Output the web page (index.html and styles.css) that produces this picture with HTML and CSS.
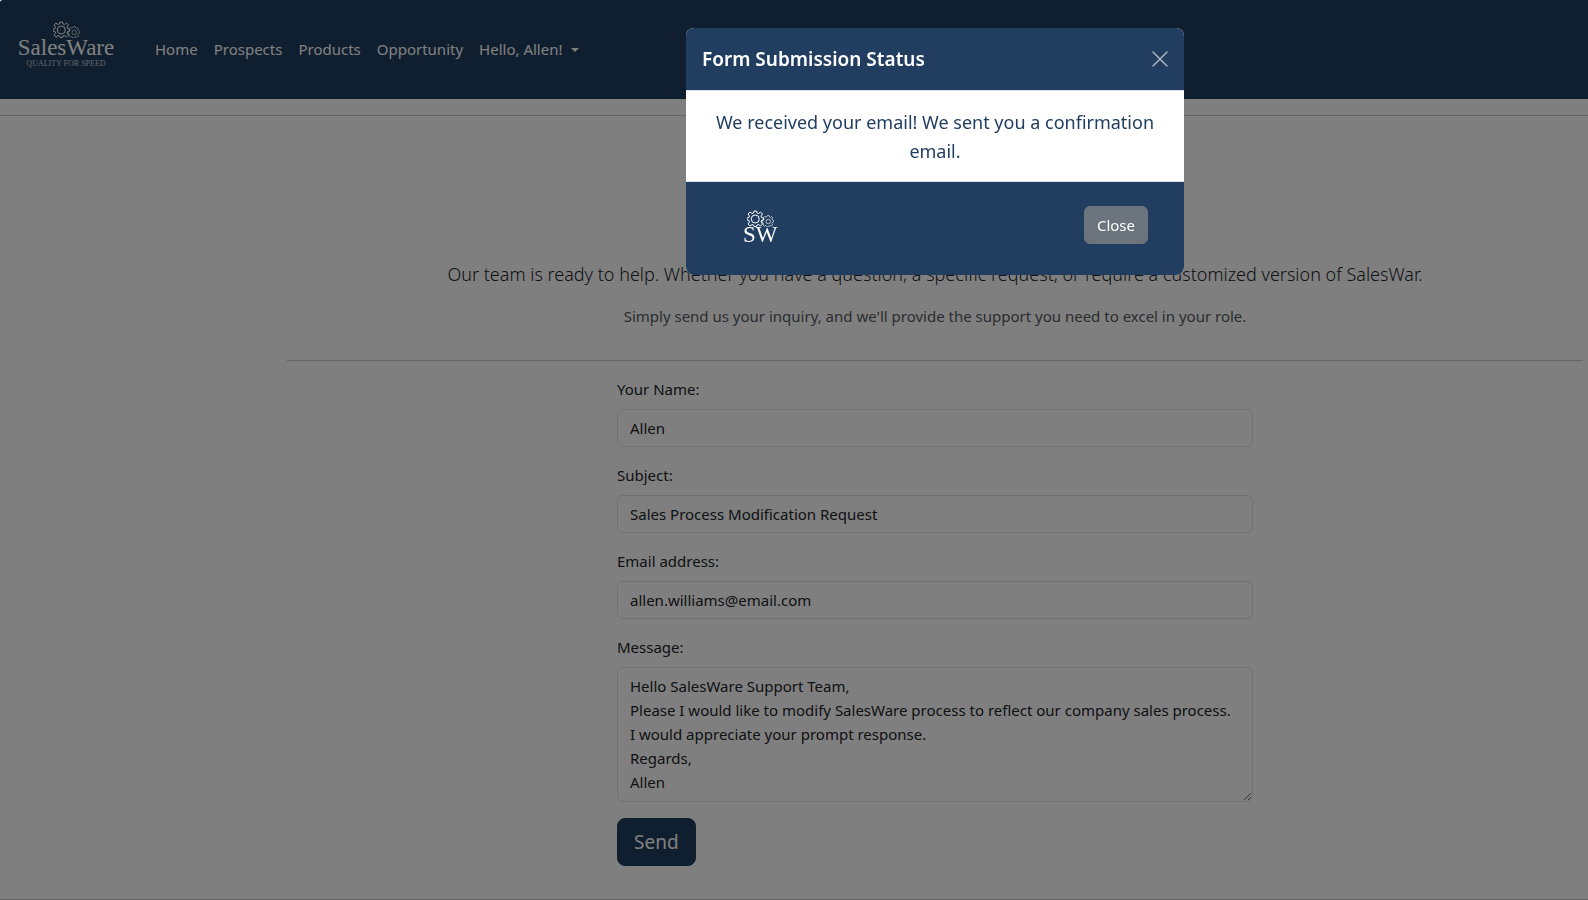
FILE: index.html
```html
<!DOCTYPE html>
<html lang="en">
<head>
<meta charset="utf-8">
<meta name="viewport" content="width=device-width, initial-scale=1">
<title>SalesWare</title>
<link rel="stylesheet" href="styles.css">
</head>
<body>
<svg class="defs" aria-hidden="true">
  <symbol id="gears" viewBox="0 0 54 34">
    <g fill="none" stroke="currentColor" stroke-width="2" stroke-linejoin="round">
      <path d="M14 2h5l1 4 3 1 4-3 4 4-3 4 1 3 4 1v4l-4 1-1 3 3 4-4 4-4-3-3 1-1 3h-5l-1-3-3-1-4 3-4-4 3-4-1-3-4-1v-4l4-1 1-3-3-4 4-4 4 3 3-1z"/>
      <circle cx="16.500" cy="18" r="8"/>
    </g>
    <g fill="none" stroke="currentColor" stroke-width="1.300" stroke-linejoin="round">
      <path d="M41 11h3l1 3 2 1 2-2 2 2-1 3 1 2 2 1v3l-2 1-1 2 1 3-2 2-3-1-2 1-1 2h-3l-1-2-2-1-2 1-3-2 1-3-1-2-2-1v-3l3-1 1-2-1-3 2-2 3 1 2-1z"/>
      <circle cx="42.500" cy="23" r="4.500"/>
    </g>
  </symbol>
</svg>

<header class="navbar">
  <a class="brand" href="#">
    <svg class="brand-gears" aria-hidden="true"><use href="#gears"/></svg>
    <span class="brand-name">SalesWare</span>
    <span class="brand-tagline">QUALITY FOR SPEED</span>
  </a>
  <nav class="nav">
    <a href="#">Home</a>
    <a href="#">Prospects</a>
    <a href="#">Products</a>
    <a href="#">Opportunity</a>
    <a class="dropdown" href="#">Hello, Allen!</a>
  </nav>
</header>
<hr class="page-rule">

<main class="content">
  <section class="intro">
    <p class="lead">Our team is ready to help. Whether you have a question, a specific request, or require a customized version of SalesWar.</p>
    <p class="sublead">Simply send us your inquiry, and we'll provide the support you need to excel in your role.</p>
  </section>
  <hr>
  <form class="contact-form">
    <div class="field">
      <label for="name">Your Name:</label>
      <input id="name" type="text" value="Allen">
    </div>
    <div class="field">
      <label for="subject">Subject:</label>
      <input id="subject" type="text" value="Sales Process Modification Request">
    </div>
    <div class="field">
      <label for="email">Email address:</label>
      <input id="email" type="email" value="allen.williams@email.com">
    </div>
    <div class="field">
      <label for="message">Message:</label>
      <textarea id="message" rows="5">Hello SalesWare Support Team,
Please I would like to modify SalesWare process to reflect our company sales process.
I would appreciate your prompt response.
Regards,
Allen</textarea>
    </div>
    <button class="send" type="button">Send</button>
  </form>
</main>
<footer class="page-footer"></footer>

<div class="backdrop">
  <div class="modal" role="dialog" aria-modal="true" aria-labelledby="modal-title">
    <div class="modal-header">
      <h1 id="modal-title">Form Submission Status</h1>
      <button class="dismiss" type="button" aria-label="Dismiss">
        <svg viewBox="0 0 16 16" aria-hidden="true"><path d="M1 1l14 14M15 1L1 15"/></svg>
      </button>
    </div>
    <p class="modal-body">We received your email! We sent you a confirmation email.</p>
    <div class="modal-footer">
      <div class="mark">
        <svg class="mark-gears" aria-hidden="true"><use href="#gears"/></svg>
        <span>SW</span>
      </div>
      <button class="close" type="button">Close</button>
    </div>
  </div>
</div>
</body>
</html>
```
FILE: styles.css
```css
:root {
  --navy: #213d60;
  --rule: #c8c9ca;
  --border: #dee2e6;
}

* {
  box-sizing: border-box;
}

body {
  margin: 0;
  min-height: 100vh;
  display: flex;
  flex-direction: column;
  background: #fff;
  color: #212529;
  font: 15px/24px "Segoe UI", "Noto Sans", sans-serif;
}

.defs {
  position: absolute;
  width: 0;
  height: 0;
}

p,
h1 {
  margin: 0;
}

hr {
  width: 100%;
  height: 1px;
  margin: 0;
  border: 0;
  background: var(--rule);
}

button,
input,
textarea {
  font: inherit;
  color: inherit;
}

.navbar {
  display: flex;
  align-items: center;
  min-height: 99px;
  background: #203e5f;
  border-top-left-radius: 3px;
  color: #fff;
}

.brand {
  display: flex;
  flex-direction: column;
  align-items: center;
  width: 131px;
  height: 74px;
  padding: 8px 0 0 2px;
  border-right: 1px solid #1c3858;
  color: #fff;
  font-family: "Liberation Serif", serif;
  text-decoration: none;
}

.brand-gears {
  width: 27px;
  height: 17px;
}

.brand-name {
  font-size: 23px;
  line-height: 20px;
}

.brand-tagline {
  color: #c4ccd5;
  font-size: 8px;
  line-height: 12px;
}

.nav {
  display: flex;
  gap: 16px;
  padding: 0 0 2px 24px;
}

.nav a {
  color: #fff;
  text-decoration: none;
}

.dropdown::after {
  content: "";
  display: inline-block;
  margin-left: 9px;
  vertical-align: 3px;
  border: 4px solid transparent;
  border-top-color: currentColor;
  border-bottom: 0;
}

.page-rule {
  margin-top: 16px;
}

.content {
  flex: 1;
  margin: 0 5px 0 287px;
}

.intro {
  padding: 143px 0 32px;
  text-align: center;
}

.lead {
  margin-bottom: 15px;
  font-size: 18px;
  line-height: 30px;
  font-weight: 350;
}

.sublead {
  color: #555a60;
}

.contact-form {
  width: calc(50% - 12px);
  margin: 16px auto 0;
}

.field {
  display: flex;
  flex-direction: column;
  gap: 8px;
  margin-bottom: 16px;
}

.field input,
.field textarea {
  display: block;
  width: 100%;
  margin: 0;
  padding: 6px 12px;
  background: #fff;
  border: 1px solid var(--border);
  border-radius: 6px;
}

.field input {
  height: 38px;
}

.field textarea {
  height: 135px;
  resize: vertical;
}

.send {
  padding: 8px 16px;
  border: 1px solid #203e5f;
  border-radius: 8px;
  background: #203e5f;
  color: #fff;
  font-size: 19px;
  line-height: 30px;
}

.page-footer {
  border-top: 1px solid #c8c0c8;
}

.backdrop {
  position: fixed;
  inset: 0;
  padding: 28px 5px 28px 287px;
  background: rgba(0, 0, 0, 0.5);
  border-top-left-radius: 3px;
}

.modal {
  max-width: 498px;
  margin: 0 auto;
  overflow: hidden;
  border-radius: 8px;
  background: #fff;
}

.modal-header {
  display: flex;
  align-items: center;
  justify-content: space-between;
  padding: 16px;
  background: var(--navy);
  color: #fff;
}

.modal-header h1 {
  font-size: 19px;
  line-height: 30px;
  font-weight: 600;
}

.dismiss {
  display: flex;
  padding: 0;
  border: 0;
  background: none;
}

.dismiss svg {
  width: 16px;
  height: 16px;
  fill: none;
  stroke: #a6b2c0;
  stroke-width: 1.5;
  stroke-linecap: round;
}

.modal-body {
  padding: 17px 16px 15px;
  border: solid var(--border);
  border-width: 1px 0;
  color: var(--navy);
  font-size: 18px;
  line-height: 29px;
  text-align: center;
}

.modal-footer {
  display: flex;
  align-items: flex-start;
  justify-content: space-between;
  min-height: 93px;
  padding: 24px 36px 24px 57px;
  background: var(--navy);
  color: #fff;
}

.mark {
  display: flex;
  flex-direction: column;
  align-items: center;
  padding-top: 4px;
  font-family: "Liberation Serif", serif;
  font-size: 23px;
  line-height: 16px;
}

.mark-gears {
  width: 27px;
  height: 17px;
}

.close {
  padding: 6px 12px;
  border: 1px solid #6c757d;
  border-radius: 6px;
  background: #6c757d;
}
```
